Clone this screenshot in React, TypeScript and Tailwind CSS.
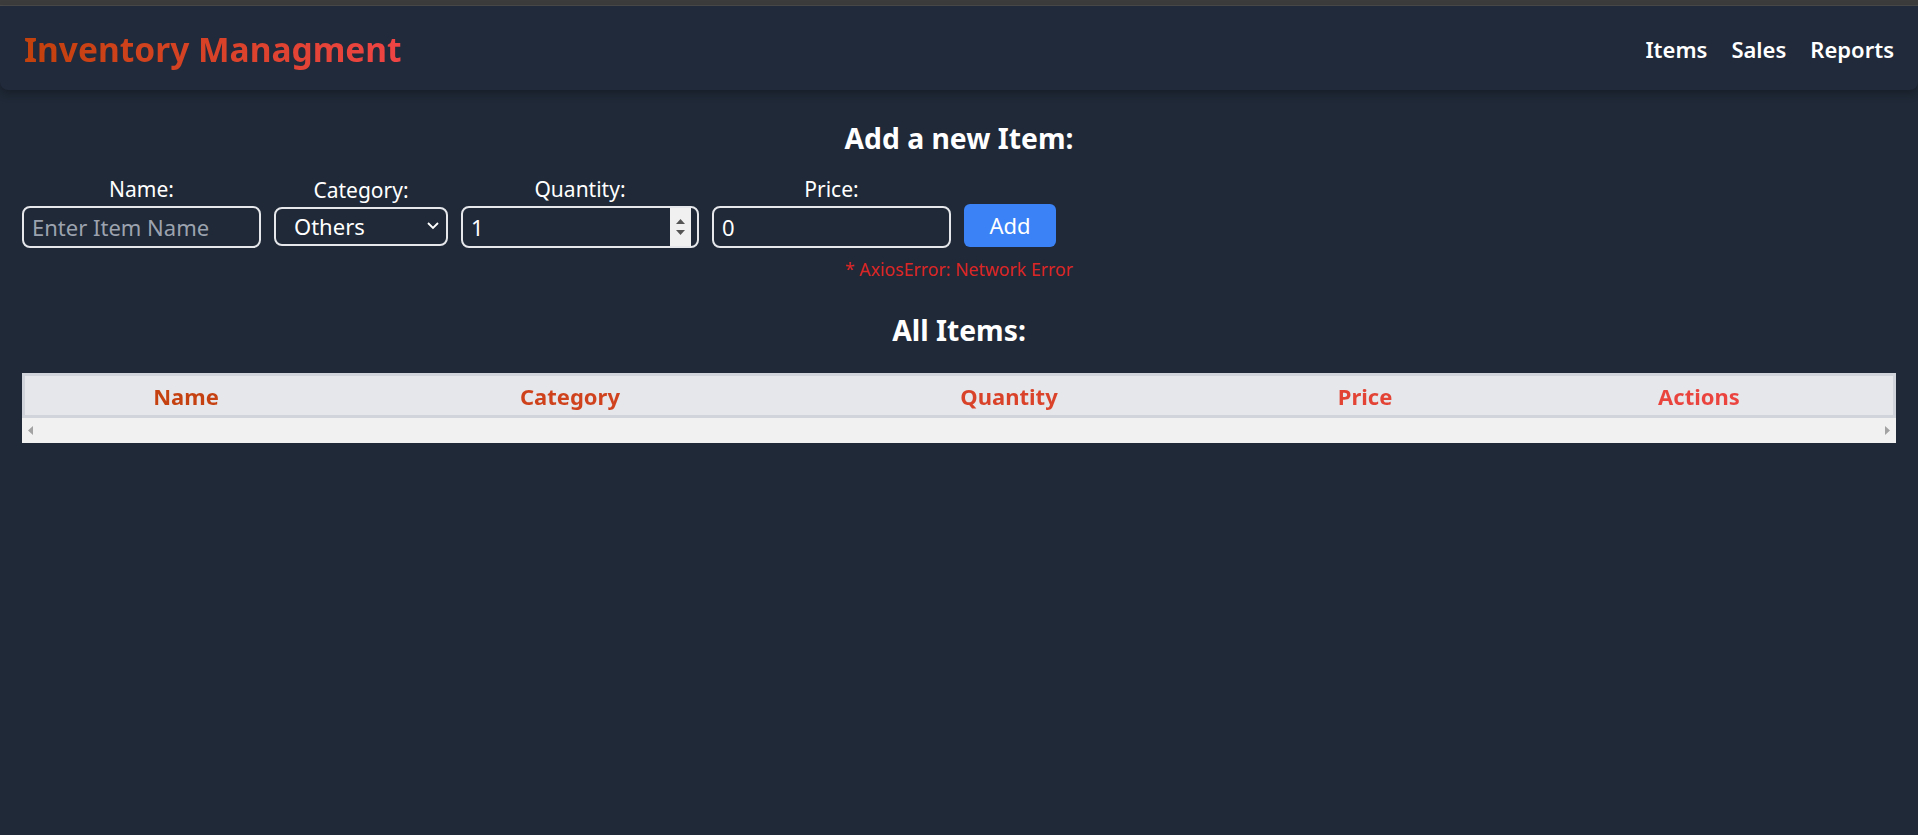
import React from "react";

export default function App() {
  const font = { fontFamily: '"Noto Sans", "Open Sans", sans-serif' };
  return (
    <div className="min-h-screen bg-[#1f2937] text-white" style={font}>
      <div className="h-[6px] bg-[#3c3c3c] border-b border-[#4a4a4a]" />
      <header className="flex h-[84px] items-center justify-between rounded-b-lg bg-[#202a3a] px-6 pt-[3px] shadow-[0_4px_8px_rgba(0,0,0,0.25)]">
        <h1 className="bg-linear-to-r/srgb from-[#c2410c] to-[#ef4444] bg-clip-text text-[33.5px] font-bold text-transparent">
          Inventory Managment
        </h1>
        <nav className="flex items-center gap-6 text-[22px] font-semibold">
          <a>Items</a>
          <a>Sales</a>
          <a>Reports</a>
        </nav>
      </header>

      <main className="px-[22px]">
        <h2 className="mt-[30px] text-center text-[28.3px] font-bold leading-[36px]">Add a new Item:</h2>

        <div className="mt-[19px] flex items-end gap-[13px]">
          <div className="flex flex-col items-center">
            <label className="mb-[3px] text-[21px] leading-[28px]">Name:</label>
            <input
              className="h-[42px] w-[239px] rounded-lg border-2 border-[#e5e7eb] bg-transparent px-2 text-[22px] text-white outline-none placeholder:text-[#9ca3af]"
              placeholder="Enter Item Name"
            />
          </div>
          <div className="flex flex-col items-center">
            <label className="mb-[3px] text-[21px] leading-[28px]">Category:</label>
            <div className="relative mb-[2px] flex h-[39px] w-[174px] items-center rounded-lg border-2 border-[#e5e7eb] pl-[18px] text-[22px]">
              <span>Others</span>
              <svg className="absolute right-[7px] top-[12px]" width="12" height="9" viewBox="0 0 12 9" fill="none">
                <path d="M1 2 L6 7 L11 2" stroke="white" strokeWidth="1.8" />
              </svg>
            </div>
          </div>
          <div className="flex flex-col items-center">
            <label className="mb-[3px] text-[21px] leading-[28px]">Quantity:</label>
            <div className="flex h-[42px] w-[238px] items-stretch rounded-lg border-2 border-[#e5e7eb]">
              <span className="flex flex-1 items-center pl-2 text-[22px]">1</span>
              <div className="mr-[6px] flex w-[21px] flex-col items-center justify-center gap-[6px] bg-[#f0f0f0]">
                <svg width="9" height="5" viewBox="0 0 9 5"><path d="M0 5 L4.5 0 L9 5 Z" fill="#555" /></svg>
                <svg width="9" height="5" viewBox="0 0 9 5"><path d="M0 0 L4.5 5 L9 0 Z" fill="#555" /></svg>
              </div>
            </div>
          </div>
          <div className="flex flex-col items-center">
            <label className="mb-[3px] text-[21px] leading-[28px]">Price:</label>
            <div className="flex h-[42px] w-[239px] items-center rounded-lg border-2 border-[#e5e7eb] pl-2 text-[22px]">
              0
            </div>
          </div>
          <button className="mb-[1px] h-[43px] w-[92px] rounded-md bg-[#3b82f6] text-[22px] text-white">Add</button>
        </div>

        <p className="mt-[9px] text-center text-[17.7px] leading-[24px] text-[#dc2626]">* AxiosError: Network Error</p>

        <h2 className="mt-[31px] text-center text-[28.3px] font-bold leading-[36px]">All Items:</h2>

        <div className="mt-[25px] bg-[#f1f1f1]">
          <div className="border-[3px] border-[#d1d5db] bg-[#e5e7eb]">
            <div className="grid h-[39px] grid-cols-[322px_446px_432px_280px_1fr] items-center bg-linear-to-r/srgb from-[#c2410c] to-[#ef4444] bg-clip-text pt-[1px] text-center text-[22px] font-bold text-transparent">
              <div>Name</div>
              <div>Category</div>
              <div>Quantity</div>
              <div>Price</div>
              <div>Actions</div>
            </div>
          </div>
          <div className="flex h-[25px] items-center justify-between px-[6px]">
            <svg width="5" height="9" viewBox="0 0 5 9"><path d="M5 0 L0 4.5 L5 9 Z" fill="#a3a3a3" /></svg>
            <svg width="5" height="9" viewBox="0 0 5 9"><path d="M0 0 L5 4.5 L0 9 Z" fill="#a3a3a3" /></svg>
          </div>
        </div>
      </main>
    </div>
  );
}
